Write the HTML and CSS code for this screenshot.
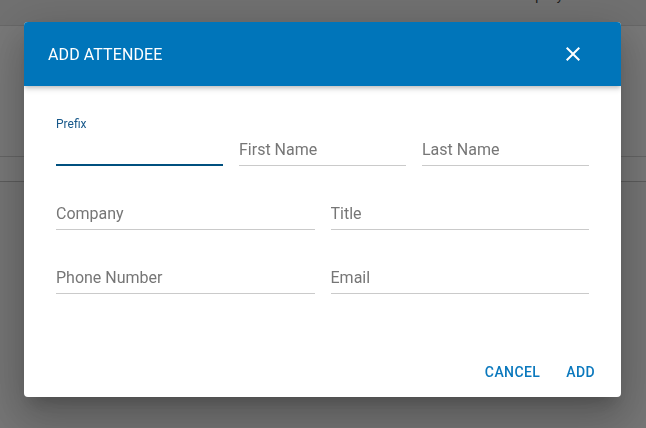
FILE: index.html
```html
<!DOCTYPE html>
<html>
<head>
<meta charset="utf-8">
<link rel="stylesheet" href="styles.css">
</head>
<body>
<div class="page">
  <div class="page-head">
    <span class="col col-email">Email</span>
    <span class="col col-company">Company</span>
  </div>
  <div class="page-row tall"></div>
  <div class="page-row short"></div>
  <div class="page-rest"></div>
</div>

<div class="backdrop">
  <div class="dialog">
    <div class="dialog-header">
      <span class="dialog-title">ADD ATTENDEE</span>
      <svg class="close" width="24" height="24" viewBox="0 0 24 24"><path fill="#fff" d="M19 6.41L17.59 5 12 10.59 6.41 5 5 6.41 10.59 12 5 17.59 6.41 19 12 13.41 17.59 19 19 17.59 13.41 12z"/></svg>
    </div>
    <div class="dialog-body">
      <div class="row three">
        <div class="field focused">
          <label class="float-label">Prefix</label>
          <input class="input" type="text">
        </div>
        <div class="field">
          <label class="float-label"></label>
          <input class="input" type="text" placeholder="First Name">
        </div>
        <div class="field">
          <label class="float-label"></label>
          <input class="input" type="text" placeholder="Last Name">
        </div>
      </div>
      <div class="row two">
        <div class="field">
          <label class="float-label"></label>
          <input class="input" type="text" placeholder="Company">
        </div>
        <div class="field">
          <label class="float-label"></label>
          <input class="input" type="text" placeholder="Title">
        </div>
      </div>
      <div class="row two">
        <div class="field">
          <label class="float-label"></label>
          <input class="input" type="text" placeholder="Phone Number">
        </div>
        <div class="field">
          <label class="float-label"></label>
          <input class="input" type="text" placeholder="Email">
        </div>
      </div>
    </div>
    <div class="dialog-actions">
      <button class="btn">CANCEL</button>
      <button class="btn">ADD</button>
    </div>
  </div>
</div>
</body>
</html>
```

FILE: styles.css
```css
* { box-sizing: border-box; }

html, body {
  margin: 0;
  padding: 0;
  width: 646px;
  height: 428px;
  overflow: hidden;
  font-family: Roboto, "Liberation Sans", Arial, sans-serif;
}

/* page behind the modal */
.page {
  display: flex;
  flex-direction: column;
  height: 428px;
  background: #fafafa;
}

.page-head {
  height: 26px;
  flex: none;
  background: #f0f0f0;
  border-bottom: 1px solid #dcdcdc;
  display: grid;
  grid-template-columns: 210px 298px auto;
  align-items: start;
  font-size: 13px;
  line-height: 15px;
  color: #333;
}

.col {
  margin-top: -12px;
  white-space: nowrap;
}

.col-email { grid-column: 2; }
.col-company { grid-column: 3; }

.page-row {
  flex: none;
  background: #ffffff;
  border-bottom: 1px solid #d6d6d6;
}

.page-row.tall { height: 131px; }
.page-row.short { height: 25px; border-bottom-color: #c4c4c4; }

.page-rest {
  flex: 1;
  background: #f8f8f8;
}

/* modal */
.backdrop {
  position: fixed;
  inset: 0;
  background: rgba(0, 0, 0, 0.535);
  padding: 22px 25px 31px 24px;
  display: flex;
  align-items: flex-start;
}

.dialog {
  width: 597px;
  background: #fff;
  border-radius: 4px;
  overflow: hidden;
  display: flex;
  flex-direction: column;
  box-shadow: 0 11px 15px -7px rgba(0,0,0,0.2), 0 24px 38px 3px rgba(0,0,0,0.14), 0 9px 46px 8px rgba(0,0,0,0.12);
}

.dialog-header {
  height: 64px;
  flex: none;
  background: #0075ba;
  color: #fff;
  display: flex;
  align-items: center;
  justify-content: space-between;
  padding: 0 36px 0 24px;
  position: relative;
  z-index: 1;
  box-shadow: 0 2px 4px -1px rgba(0,0,0,0.2), 0 4px 5px 0 rgba(0,0,0,0.1);
}

.dialog-title {
  font-size: 16px;
  font-weight: 400;
  letter-spacing: 0.1px;
}

.close { display: block; }

.dialog-body {
  padding: 31px 32px 51px;
  display: flex;
  flex-direction: column;
  gap: 15px;
}

.row {
  display: grid;
  column-gap: 16px;
}

.row.three { grid-template-columns: 1fr 1fr 1fr; }
.row.two { grid-template-columns: 1fr 1fr; }

.field {
  display: flex;
  flex-direction: column;
  min-width: 0;
}

.float-label {
  display: block;
  height: 22px;
  font-size: 12px;
  line-height: 14px;
  color: #17588a;
}

.input {
  display: block;
  width: 100%;
  height: 27px;
  margin: 0;
  border: 0;
  border-bottom: 1px solid #cacaca;
  border-radius: 0;
  padding: 1px 0 6px;
  font-family: Roboto, "Liberation Sans", Arial, sans-serif;
  font-size: 16px;
  line-height: 19px;
  color: #222;
  background: transparent;
  outline: none;
}

.input::placeholder {
  color: #767676;
  opacity: 1;
}

.field.focused .input {
  border-bottom: 2px solid #00507f;
  padding-bottom: 5px;
}

.dialog-actions {
  height: 52px;
  flex: none;
  display: flex;
  justify-content: flex-end;
  align-items: flex-start;
  gap: 10px;
  padding: 9px 18px 7px;
}

.btn {
  height: 36px;
  padding: 0 8px;
  margin: 0;
  border: 0;
  background: transparent;
  font-family: Roboto, "Liberation Sans", Arial, sans-serif;
  font-size: 14px;
  font-weight: 500;
  letter-spacing: 0.4px;
  line-height: 36px;
  color: #0a78bd;
}
```
